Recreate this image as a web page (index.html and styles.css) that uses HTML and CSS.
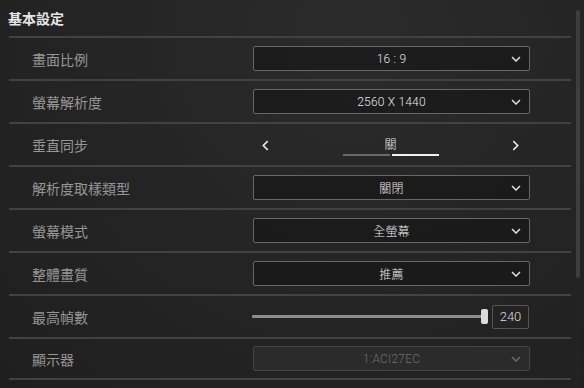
FILE: index.html
```html
<!DOCTYPE html>
<html lang="zh-Hant">
<head>
<meta charset="utf-8">
<title>基本設定</title>
<link rel="stylesheet" href="styles.css">
</head>
<body>
<div class="page">
  <main class="panel">
    <h1 class="title">基本設定</h1>
    <div class="row">
      <div class="label">畫面比例</div>
      <div class="select"><span class="value">16 : 9</span><svg class="chev" viewBox="0 0 10 6"><path d="M1 1 L5 5 L9 1"/></svg></div>
    </div>
    <div class="row">
      <div class="label">螢幕解析度</div>
      <div class="select"><span class="value">2560 X 1440</span><svg class="chev" viewBox="0 0 10 6"><path d="M1 1 L5 5 L9 1"/></svg></div>
    </div>
    <div class="row">
      <div class="label">垂直同步</div>
      <div class="toggle">
        <svg class="arrow" viewBox="0 0 6 10"><path d="M5 1 L1 5 L5 9"/></svg>
        <div class="toggle-mid">
          <span class="toggle-text">關</span>
          <div class="toggle-bars"><span class="bar off"></span><span class="bar on"></span></div>
        </div>
        <svg class="arrow" viewBox="0 0 6 10"><path d="M1 1 L5 5 L1 9"/></svg>
      </div>
    </div>
    <div class="row">
      <div class="label">解析度取樣類型</div>
      <div class="select"><span class="value">關閉</span><svg class="chev" viewBox="0 0 10 6"><path d="M1 1 L5 5 L9 1"/></svg></div>
    </div>
    <div class="row">
      <div class="label">螢幕模式</div>
      <div class="select"><span class="value">全螢幕</span><svg class="chev" viewBox="0 0 10 6"><path d="M1 1 L5 5 L9 1"/></svg></div>
    </div>
    <div class="row">
      <div class="label">整體畫質</div>
      <div class="select"><span class="value">推薦</span><svg class="chev" viewBox="0 0 10 6"><path d="M1 1 L5 5 L9 1"/></svg></div>
    </div>
    <div class="row">
      <div class="label">最高幀數</div>
      <div class="slider">
        <div class="track"><span class="thumb"></span></div>
        <div class="numbox">240</div>
      </div>
    </div>
    <div class="row last">
      <div class="label">顯示器</div>
      <div class="select disabled"><span class="value">1:ACI27EC</span><svg class="chev" viewBox="0 0 10 6"><path d="M1 1 L5 5 L9 1"/></svg></div>
    </div>
  </main>
  <div class="scrollbar"><div class="thumb-v"></div></div>
</div>
</body>
</html>
```
FILE: styles.css
```css
* { box-sizing: border-box; }
html, body { margin: 0; padding: 0; }
body {
  width: 584px;
  height: 388px;
  overflow: hidden;
  background: radial-gradient(ellipse at 60% 10%, #2b2b2b 0%, #252525 45%, #1f1f1f 100%);
  font-family: "Noto Sans CJK TC", "Noto Sans", sans-serif;
  color: #e0e0e0;
}
.page {
  display: flex;
  padding-left: 9px;
  height: 388px;
}
.panel {
  width: 562px;
}
.title {
  margin: 0 0 0 -1px;
  height: 36px;
  line-height: 36px;
  font-size: 14px;
  font-weight: 700;
  color: #e6e6e6;
}
.row {
  height: 43px;
  border-top: 2px solid #424242;
  display: flex;
  align-items: center;
  padding-right: 41px;
}
.row.last {
  border-bottom: 2px solid #424242;
}
.label {
  width: 244px;
  padding-left: 23px;
  font-size: 14px;
  color: #969696;
  line-height: 1;
  margin-top: 1px;
  font-weight: 400;
}
.select {
  width: 277px;
  height: 25px;
  border: 1px solid #666;
  border-radius: 2px;
  background: rgba(18, 18, 18, 0.55);
  display: flex;
  align-items: center;
  justify-content: center;
  position: relative;
}
.value {
  font-family: Roboto, "Noto Sans CJK TC", sans-serif;
  font-size: 12px;
  font-weight: 300;
  color: #e6e6e6;
  letter-spacing: 0.2px;
}
.chev {
  position: absolute;
  right: 8px;
  top: 9px;
  width: 10px;
  height: 6px;
  fill: none;
  stroke: #e0e0e0;
  stroke-width: 1.5;
}
.select.disabled {
  background: rgba(60, 60, 60, 0.35);
  border-color: #444;
}
.select.disabled .value { color: #6e6e6e; }
.select.disabled .chev { stroke: #6a6a6a; }
.toggle {
  width: 277px;
  height: 30px;
  display: flex;
  align-items: center;
  justify-content: space-between;
  padding: 0 11px 0 9px;
}
.arrow {
  width: 7px;
  height: 11px;
  fill: none;
  stroke: #e6e6e6;
  stroke-width: 1.5;
  margin-top: 1px;
}
.toggle-mid {
  display: flex;
  flex-direction: column;
  align-items: center;
  gap: 3px;
  margin-top: 4px;
}
.toggle-text {
  font-size: 12px;
  font-weight: 300;
  color: #e6e6e6;
  line-height: 14px;
}
.toggle-bars {
  display: flex;
  gap: 2px;
}
.bar {
  width: 47px;
  height: 2px;
}
.bar.off { background: #6a6a6a; }
.bar.on { background: #f0f0f0; }
.slider {
  width: 277px;
  display: flex;
  align-items: center;
  gap: 6px;
  margin-left: -1px;
}
.track {
  flex: 1;
  height: 3px;
  background: #8d8d8d;
  border-radius: 1px;
  position: relative;
}
.thumb {
  position: absolute;
  right: -2px;
  top: -6px;
  width: 7px;
  height: 15px;
  background: #dcdcdc;
  border-radius: 2px;
}
.numbox {
  width: 37px;
  height: 24px;
  border: 1px solid #555;
  border-radius: 2px;
  display: flex;
  align-items: center;
  justify-content: center;
  font-family: Roboto, sans-serif;
  font-size: 13px;
  font-weight: 300;
  color: #dedede;
}
.scrollbar {
  width: 4px;
  margin-left: 5px;
  padding-top: 10px;
  height: 388px;
  background: linear-gradient(#232323, #232323) no-repeat 0 10px / 4px 378px;
}
.thumb-v {
  width: 4px;
  height: 268px;
  background: #3e3e3e;
  border-radius: 2px;
}
```
